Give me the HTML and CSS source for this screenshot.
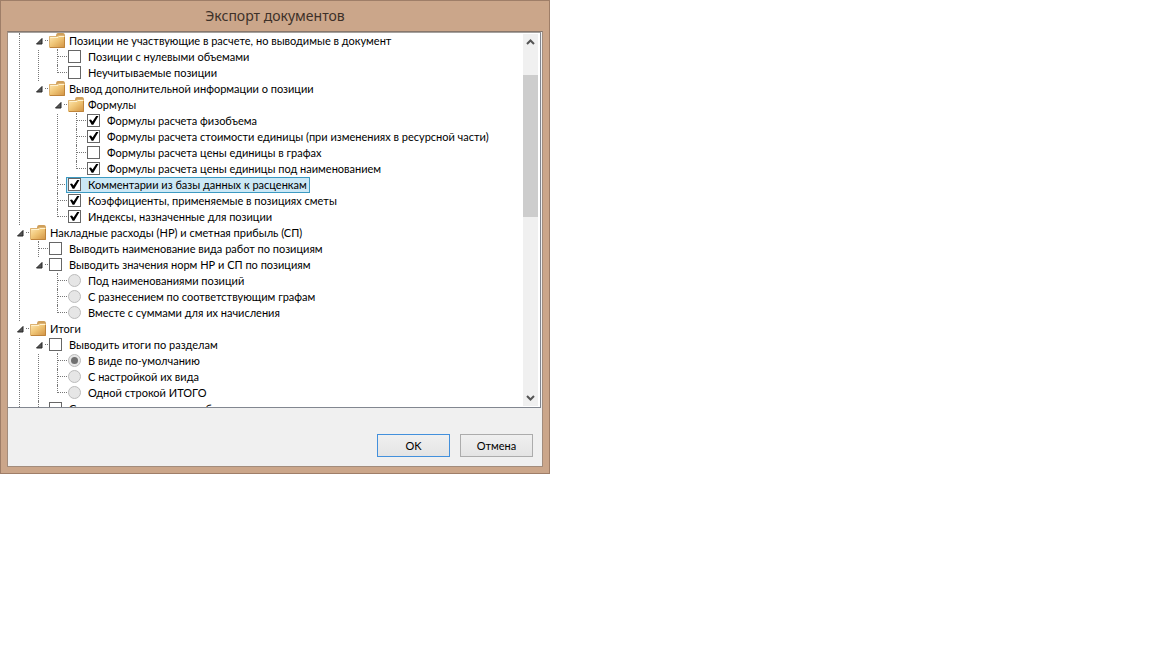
FILE: index.html
```html
<!DOCTYPE html>
<html lang="ru">
<head>
  <meta charset="utf-8">
  <title>Экспорт документов</title>
  <link rel="stylesheet" href="styles.css">
</head>
<body>
<svg class="defs" width="0" height="0">
  <defs>
    <linearGradient id="front" x1="0" y1="0" x2="1" y2="1">
      <stop offset="0" stop-color="#ffe9b5"/>
      <stop offset="0.45" stop-color="#f0c677"/>
      <stop offset="1" stop-color="#cf8f3f"/>
    </linearGradient>
    <symbol id="folder" viewBox="0 0 17 16">
      <path d="M7 3 Q7 0 9 0 H14 Q16 0 16 3 V6 H7 Z" fill="#cf9f5a"/>
      <path d="M0 3 H16 V14 Q16 15 15 15 H1 Q0 15 0 14 Z" fill="url(#front)"/>
      <path d="M0.5 14 V3.5 H8 L9 2.5 H15" fill="none" stroke="#dcb272"/>
      <path d="M1.5 5 V4.5 H9 L10 3.5 H15" fill="none" stroke="#fff2cf"/>
      <path d="M1 14.5 H15.5 V4" fill="none" stroke="#bf843b"/>
    </symbol>
    <symbol id="arrow" viewBox="0 0 7 7">
      <path d="M6 0.5 V6 H0.5 Z" fill="#555" stroke="#262626"/>
    </symbol>
  </defs>
</svg>

<div class="dialog">
  <h1 class="title">Экспорт документов</h1>
  <div class="content">
    <div class="list">
      <ul class="tree">
        <li>
          <ul>
            <li>
              <div class="row"><button class="toggle" aria-label="Свернуть"><svg><use href="#arrow"/></svg></button><svg class="folder"><use href="#folder"/></svg><span class="text">Позиции не участвующие в расчете, но выводимые в документ</span></div>
              <ul>
                <li><label class="row"><input type="checkbox"><span class="text">Позиции с нулевыми объемами</span></label></li>
                <li><label class="row"><input type="checkbox"><span class="text">Неучитываемые позиции</span></label></li>
              </ul>
            </li>
            <li>
              <div class="row"><button class="toggle" aria-label="Свернуть"><svg><use href="#arrow"/></svg></button><svg class="folder"><use href="#folder"/></svg><span class="text">Вывод дополнительной информации о позиции</span></div>
              <ul>
                <li>
                  <div class="row"><button class="toggle" aria-label="Свернуть"><svg><use href="#arrow"/></svg></button><svg class="folder"><use href="#folder"/></svg><span class="text">Формулы</span></div>
                  <ul>
                    <li><label class="row"><input type="checkbox" checked><span class="text">Формулы расчета физобъема</span></label></li>
                    <li><label class="row"><input type="checkbox" checked><span class="text">Формулы расчета стоимости единицы (при изменениях в ресурсной части)</span></label></li>
                    <li><label class="row"><input type="checkbox"><span class="text">Формулы расчета цены единицы в графах</span></label></li>
                    <li><label class="row"><input type="checkbox" checked><span class="text">Формулы расчета цены единицы под наименованием</span></label></li>
                  </ul>
                </li>
                <li><label class="row selected"><input type="checkbox" checked><span class="text">Комментарии из базы данных к расценкам</span></label></li>
                <li><label class="row"><input type="checkbox" checked><span class="text">Коэффициенты, применяемые в позициях сметы</span></label></li>
                <li><label class="row"><input type="checkbox" checked><span class="text">Индексы, назначенные для позиции</span></label></li>
              </ul>
            </li>
          </ul>
        </li>
        <li>
          <div class="row"><button class="toggle" aria-label="Свернуть"><svg><use href="#arrow"/></svg></button><svg class="folder"><use href="#folder"/></svg><span class="text">Накладные расходы (НР) и сметная прибыль (СП)</span></div>
          <ul>
            <li><label class="row"><input type="checkbox"><span class="text">Выводить наименование вида работ по позициям</span></label></li>
            <li>
              <div class="row"><button class="toggle" aria-label="Свернуть"><svg><use href="#arrow"/></svg></button><input type="checkbox" id="norms"><label class="text" for="norms">Выводить значения норм НР и СП по позициям</label></div>
              <ul>
                <li><label class="row"><input type="radio" name="norm" disabled><span class="text">Под наименованиями позиций</span></label></li>
                <li><label class="row"><input type="radio" name="norm" disabled><span class="text">С разнесением по соответствующим графам</span></label></li>
                <li><label class="row"><input type="radio" name="norm" disabled><span class="text">Вместе с суммами для их начисления</span></label></li>
              </ul>
            </li>
          </ul>
        </li>
        <li class="open">
          <div class="row"><button class="toggle" aria-label="Свернуть"><svg><use href="#arrow"/></svg></button><svg class="folder"><use href="#folder"/></svg><span class="text">Итоги</span></div>
          <ul>
            <li>
              <div class="row"><button class="toggle" aria-label="Свернуть"><svg><use href="#arrow"/></svg></button><input type="checkbox" id="totals"><label class="text" for="totals">Выводить итоги по разделам</label></div>
              <ul>
                <li><label class="row"><input type="radio" name="total" checked disabled><span class="text">В виде по-умолчанию</span></label></li>
                <li><label class="row"><input type="radio" name="total" disabled><span class="text">С настройкой их вида</span></label></li>
                <li><label class="row"><input type="radio" name="total" disabled><span class="text">Одной строкой ИТОГО</span></label></li>
              </ul>
            </li>
            <li class="open"><label class="row"><input type="checkbox"><span class="text">Суммировать итоги смет объекта</span></label></li>
          </ul>
        </li>
      </ul>
      <div class="scrollbar">
        <button class="scroll" aria-label="Вверх"><svg viewBox="0 0 9 6"><path d="M1 5 L4.5 1.5 L8 5"/></svg></button>
        <div class="track"><div class="thumb"></div></div>
        <button class="scroll" aria-label="Вниз"><svg viewBox="0 0 9 6"><path d="M1 1 L4.5 4.5 L8 1"/></svg></button>
      </div>
    </div>
    <div class="buttons">
      <button class="btn default">OK</button>
      <button class="btn">Отмена</button>
    </div>
  </div>
</div>
</body>
</html>
```
FILE: styles.css
```css
body{
  margin: 0;
  background-color: white;
  font-family: Lato, "Liberation Sans", sans-serif;
  font-size: 11px;
  line-height: 16px;
  color: black;
}
.defs{
  position: absolute;
}
.dialog{
  box-sizing: border-box;
  width: 100%;
  max-width: 550px;
  padding: 0 6px 6px;
  border: 1px solid #9f7e68;
  background-color: #cba68a;
}
.title{
  margin: 0;
  font-family: "Noto Sans", sans-serif;
  font-size: 14px;
  font-weight: 400;
  line-height: 30px;
  text-align: center;
  color: #3d3028;
}
.content{
  border: 1px solid #a28c7c;
  border-top-color: #87776c;
  background-color: #f0f0f0;
}
.list{
  display: flex;
  max-height: 374px;
  overflow: hidden;
  margin-right: 1px;
  border-right: 1px solid #828790;
  border-bottom: 1px solid #828790;
  border-top: 1px solid #a5a19e;
  background-color: white;
}

/* tree */
.tree{
  flex: 1;
  min-width: 0;
}
ul{
  margin: 0;
  padding: 0;
  list-style: none;
}
ul ul{
  padding-left: 19px;
}
.tree li{
  position: relative;
}
.tree li:before{
  content: "";
  position: absolute;
  left: 11px;
  top: 0;
  bottom: 0;
  border-left: 1px dotted #777;
}
.tree li:last-child:before{
  bottom: auto;
  height: 8px;
}
.tree li.open:before{
  bottom: 0;
  height: auto;
}
.row{
  position: relative;
  display: flex;
  align-items: flex-start;
  height: 16px;
  padding-left: 22px;
  white-space: nowrap;
}
.row:before{
  content: "";
  position: absolute;
  left: 12px;
  top: 7px;
  width: 9px;
  border-top: 1px dotted #777;
}
.toggle{
  position: absolute;
  left: 5px;
  top: 0;
  width: 13px;
  height: 16px;
  padding: 0;
  border: 0;
  background-color: white;
}
.toggle svg{
  display: block;
  width: 7px;
  height: 7px;
  margin-left: 4px;
}
.folder{
  flex: none;
  width: 17px;
  height: 16px;
}
.text{
  padding: 0 3px;
}
input{
  flex: none;
  appearance: none;
  box-sizing: border-box;
  width: 13px;
  height: 13px;
  margin: 1px 4px 0 0;
  border: 1px solid #666;
  background-color: white;
}
input[type=checkbox]:checked:before{
  content: "";
  display: block;
  height: 11px;
  background-color: black;
  clip-path: polygon(9% 46%, 27% 40%, 41% 58%, 74% 10%, 95% 10%, 48% 88%, 33% 88%);
}
input[type=radio]{
  border-color: #bcbcbc;
  border-radius: 50%;
  background-color: #e6e6e6;
}
input[type=radio]:checked:before{
  content: "";
  display: block;
  width: 7px;
  height: 7px;
  margin: 2px;
  border-radius: 50%;
  background-color: #707070;
}
.selected{
  width: fit-content;
}
.selected .text,
.selected input{
  z-index: 1;
}
.selected:after{
  content: "";
  position: absolute;
  left: 20px;
  right: 0;
  top: 0;
  bottom: 0;
  border: 1px solid #3c9ac2;
  box-sizing: border-box;
  background-color: #cbe8f6;
}

/* scrollbar */
.scrollbar{
  display: flex;
  flex-direction: column;
  width: 15px;
  margin: 1px 2px 1px 0;
  background-color: #f0f0f0;
  height: 372px;
}
.scroll{
  height: 16px;
  padding: 0;
  border: 0;
  background: none;
}
.scroll svg{
  display: block;
  width: 9px;
  height: 6px;
  margin: 0 auto;
  fill: none;
  stroke: #555;
  stroke-width: 2;
}
.track{
  flex: 1;
  padding-top: 25px;
}
.thumb{
  height: 142px;
  background-color: #cdcdcd;
}

.buttons{
  display: flex;
  justify-content: flex-end;
  gap: 10px;
  padding: 26px 9px 9px;
}
.btn{
  width: 73px;
  height: 23px;
  padding: 0;
  border: 1px solid #acacac;
  background: linear-gradient(#f0f0f0, #e4e4e4);
  font: inherit;
  color: black;
}
.default{
  border-color: #4390dc;
}
```
